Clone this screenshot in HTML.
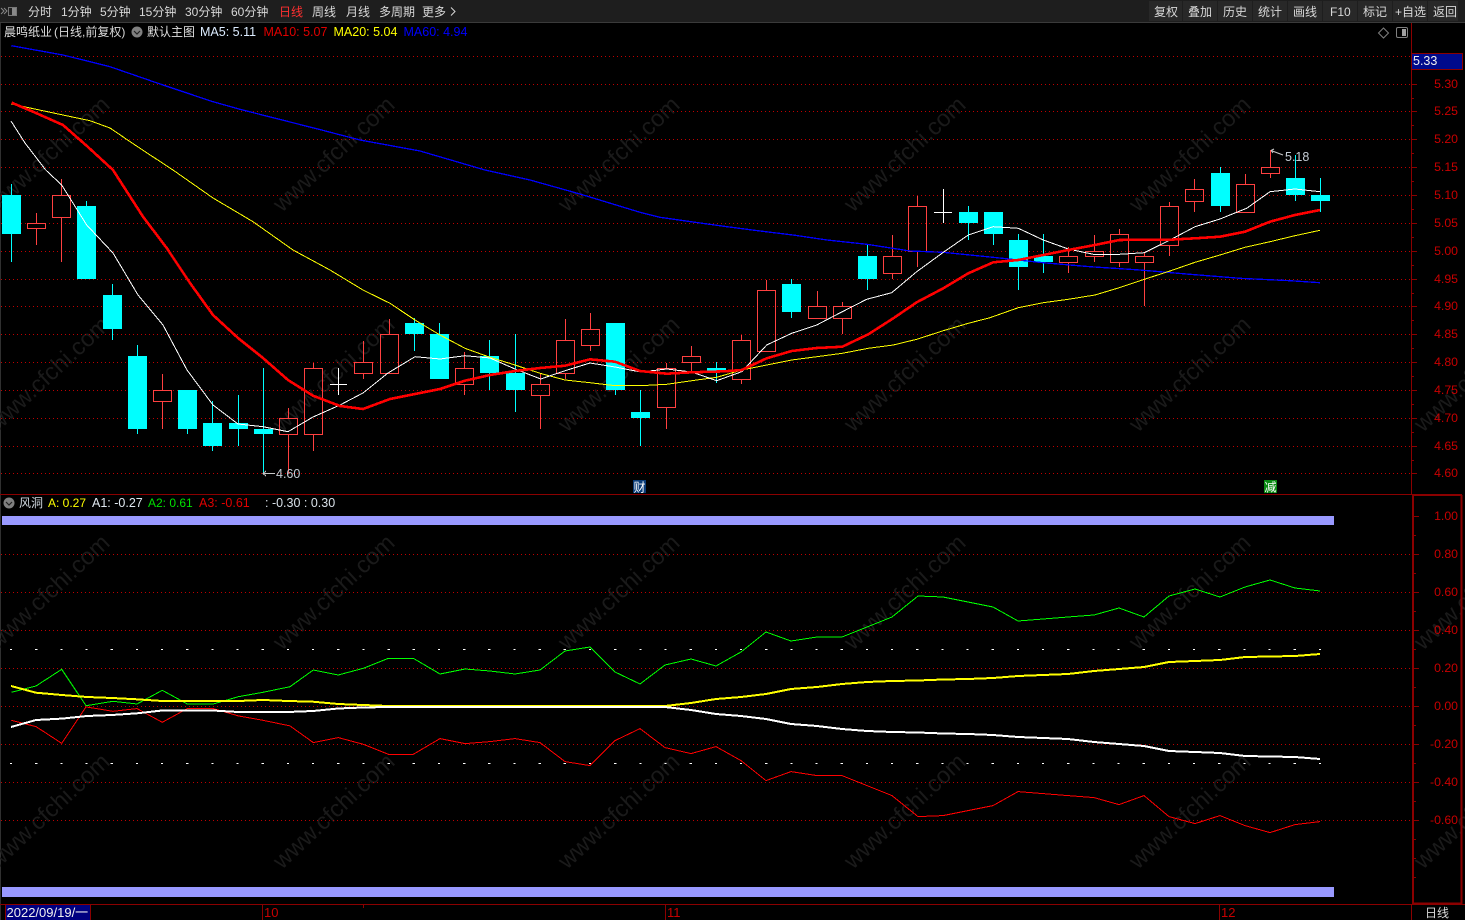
<!DOCTYPE html>
<html>
<head>
<meta charset="utf-8">
<style>
html,body{margin:0;padding:0;background:#000;width:1465px;height:920px;overflow:hidden}
svg{display:block;position:absolute;left:0;top:0}
text{font-family:"Liberation Sans","Noto Sans CJK SC",sans-serif;white-space:pre}
.tb{font-size:12px;fill:#d8d8d8}
.ax{font-size:12.3px;fill:#c80000;text-anchor:end}
.wm{font-size:23.6px;fill:#1a1a1a}
.lg{font-size:12.5px}
</style>
</head>
<body>
<svg width="1465" height="920" viewBox="0 0 1465 920" xmlns="http://www.w3.org/2000/svg">
<defs>
<pattern id="dots" patternUnits="userSpaceOnUse" width="4" height="1"><rect x="1" y="0" width="1" height="1" fill="#c00000"/></pattern>
</defs>
<rect width="1465" height="920" fill="#000"/>
<rect x="0" y="0" width="1" height="920" fill="#303030"/>

<!-- watermarks -->
<g class="wm">
<text transform="translate(-3,213) rotate(-43)">www.cfchi.com</text>
<text transform="translate(282,213) rotate(-43)">www.cfchi.com</text>
<text transform="translate(567,213) rotate(-43)">www.cfchi.com</text>
<text transform="translate(853,213) rotate(-43)">www.cfchi.com</text>
<text transform="translate(1138,213) rotate(-43)">www.cfchi.com</text>
<text transform="translate(-3,433) rotate(-43)">www.cfchi.com</text>
<text transform="translate(282,433) rotate(-43)">www.cfchi.com</text>
<text transform="translate(567,433) rotate(-43)">www.cfchi.com</text>
<text transform="translate(853,433) rotate(-43)">www.cfchi.com</text>
<text transform="translate(1138,433) rotate(-43)">www.cfchi.com</text>
<text transform="translate(1423,433) rotate(-43)">www.cfchi.com</text>
<text transform="translate(-3,651) rotate(-43)">www.cfchi.com</text>
<text transform="translate(282,651) rotate(-43)">www.cfchi.com</text>
<text transform="translate(567,651) rotate(-43)">www.cfchi.com</text>
<text transform="translate(853,651) rotate(-43)">www.cfchi.com</text>
<text transform="translate(1138,651) rotate(-43)">www.cfchi.com</text>
<text transform="translate(1423,651) rotate(-43)">www.cfchi.com</text>
<text transform="translate(-3,870) rotate(-43)">www.cfchi.com</text>
<text transform="translate(282,870) rotate(-43)">www.cfchi.com</text>
<text transform="translate(567,870) rotate(-43)">www.cfchi.com</text>
<text transform="translate(853,870) rotate(-43)">www.cfchi.com</text>
<text transform="translate(1138,870) rotate(-43)">www.cfchi.com</text>
<text transform="translate(1423,870) rotate(-43)">www.cfchi.com</text>
</g>

<!-- grids -->
<path fill="url(#dots)" shape-rendering="crispEdges" d="M1 56H1411V57H1ZM1 84H1411V85H1ZM1 111H1411V112H1ZM1 139H1411V140H1ZM1 167H1411V168H1ZM1 195H1411V196H1ZM1 223H1411V224H1ZM1 251H1411V252H1ZM1 279H1411V280H1ZM1 306H1411V307H1ZM1 334H1411V335H1ZM1 362H1411V363H1ZM1 390H1411V391H1ZM1 418H1411V419H1ZM1 446H1411V447H1ZM1 473H1411V474H1ZM1 554H1411V555H1ZM1 592H1411V593H1ZM1 630H1411V631H1ZM1 668H1411V669H1ZM1 706H1411V707H1ZM1 744H1411V745H1ZM1 782H1411V783H1ZM1 820H1411V821H1Z"/>
<path d="M10 649.5H1322M10 763.5H1322" stroke="#ffffff" stroke-width="1" stroke-dasharray="2.2 22.97" fill="none" shape-rendering="crispEdges"/>

<!-- candles: cyan wicks -->
<path shape-rendering="crispEdges" fill="none" stroke="#00ffff" stroke-width="1" d="M11.5 184V262M86.5 201V207M112.5 284V340M137.5 345V434M187.5 428V434M212.5 401V451M238.5 395V446M263.5 368V473M414.5 318V351M439.5 323V335M489.5 340V390M515.5 334V412M615.5 385V395M640.5 390V446M716.5 362V383M791.5 279V318M867.5 245V290M968.5 206V240M993.5 232V245M1018.5 234V290M1043.5 234V273M1220.5 167V212M1295.5 155V201M1320.5 178V212"/>
<!-- cyan bodies -->
<g fill="#00ffff" shape-rendering="crispEdges">
<rect x="2" y="195" width="19" height="39"/>
<rect x="77" y="206" width="19" height="73"/>
<rect x="103" y="295" width="19" height="34"/>
<rect x="128" y="356" width="19" height="73"/>
<rect x="178" y="390" width="19" height="39"/>
<rect x="203" y="423" width="19" height="23"/>
<rect x="229" y="423" width="19" height="6"/>
<rect x="254" y="429" width="19" height="5"/>
<rect x="405" y="323" width="19" height="11"/>
<rect x="430" y="334" width="19" height="45"/>
<rect x="480" y="356" width="19" height="17"/>
<rect x="506" y="373" width="19" height="17"/>
<rect x="606" y="323" width="19" height="67"/>
<rect x="631" y="412" width="19" height="6"/>
<rect x="707" y="368" width="19" height="4"/>
<rect x="782" y="284" width="19" height="28"/>
<rect x="858" y="256" width="19" height="23"/>
<rect x="959" y="212" width="19" height="11"/>
<rect x="984" y="212" width="19" height="22"/>
<rect x="1009" y="240" width="19" height="27"/>
<rect x="1034" y="256" width="19" height="6"/>
<rect x="1211" y="173" width="19" height="33"/>
<rect x="1286" y="178" width="19" height="17"/>
<rect x="1311" y="195" width="19" height="6"/>
</g>
<!-- red wicks -->
<path shape-rendering="crispEdges" fill="none" stroke="#ff4040" stroke-width="1" d="M36.5 213V223M36.5 229V245M61.5 179V195M61.5 218V262M162.5 374V390M162.5 402V429M288.5 408V418M288.5 435V473M313.5 363V368M313.5 435V451M363.5 341V362M363.5 373V379M389.5 319V334M464.5 352V368M464.5 384V395M540.5 373V384M540.5 396V429M565.5 319V340M565.5 373V379M590.5 313V329M590.5 346V351M666.5 363V368M666.5 408V429M691.5 346V356M691.5 363V372M741.5 335V340M741.5 379V384M766.5 280V290M817.5 291V306M842.5 302V306M842.5 319V334M892.5 235V256M892.5 274V279M917.5 196V206M917.5 252V267M1068.5 247V256M1068.5 263V273M1094.5 235V251M1094.5 257V262M1119.5 229V234M1119.5 263V267M1144.5 252V256M1144.5 263V306M1169.5 202V206M1169.5 245V256M1194.5 179V189M1194.5 202V212M1245.5 174V184M1270.5 150V167M1270.5 174V178"/>
<!-- red bodies -->
<g fill="none" stroke="#ff4040" stroke-width="1" shape-rendering="crispEdges">
<rect x="27.5" y="223.5" width="18" height="5"/>
<rect x="52.5" y="195.5" width="18" height="22"/>
<rect x="153.5" y="390.5" width="18" height="11"/>
<rect x="279.5" y="418.5" width="18" height="16"/>
<rect x="304.5" y="368.5" width="18" height="66"/>
<rect x="354.5" y="362.5" width="18" height="11"/>
<rect x="380.5" y="334.5" width="18" height="39"/>
<rect x="455.5" y="368.5" width="18" height="16"/>
<rect x="531.5" y="384.5" width="18" height="11"/>
<rect x="556.5" y="340.5" width="18" height="33"/>
<rect x="581.5" y="329.5" width="18" height="16"/>
<rect x="657.5" y="368.5" width="18" height="39"/>
<rect x="682.5" y="356.5" width="18" height="6"/>
<rect x="732.5" y="340.5" width="18" height="39"/>
<rect x="757.5" y="290.5" width="18" height="61"/>
<rect x="808.5" y="306.5" width="18" height="12"/>
<rect x="833.5" y="306.5" width="18" height="12"/>
<rect x="883.5" y="256.5" width="18" height="17"/>
<rect x="908.5" y="206.5" width="18" height="45"/>
<rect x="1059.5" y="256.5" width="18" height="6"/>
<rect x="1085.5" y="251.5" width="18" height="5"/>
<rect x="1110.5" y="234.5" width="18" height="28"/>
<rect x="1135.5" y="256.5" width="18" height="6"/>
<rect x="1160.5" y="206.5" width="18" height="39"/>
<rect x="1185.5" y="189.5" width="18" height="12"/>
<rect x="1236.5" y="184.5" width="18" height="28"/>
<rect x="1261.5" y="167.5" width="18" height="6"/>
</g>
<!-- doji crosses -->
<path shape-rendering="crispEdges" fill="none" stroke="#fff" stroke-width="1" d="M338.5 368V395M330 384.5H347M943.5 189V223M934 212.5H952"/>

<!-- MA60 -->
<polyline shape-rendering="crispEdges" fill="none" stroke="#0000ff" stroke-width="1.3" points="11.3,45.7 63,55 110,66.7 163,85 213,101.7 240,109.3 273,117.7 315,128.3 360,140 420,151 485,170 530,180 580,194 640,212.3 660,217.3 693,222 727,226.7 760,231 793,235 827,240 867,244.3 910,251 943,252.3 993,257.3 1043,262.7 1090,266.7 1140,270 1190,274.3 1240,278.3 1290,280.7 1320,282.7"/>
<!-- MA20 -->
<polyline shape-rendering="crispEdges" fill="none" stroke="#ffff00" stroke-width="1" points="11.3,104 63,115 90,120.7 110,128 135,145 173,170 213,198 253,221.7 293,250 330,270 363,290 390,303.3 415,320 440,335 465,348.3 490,357.3 515,365 540,373.3 565,380 590,382.7 615,385.7 640,385.7 666.7,384.3 691.7,380.7 716.7,377.3 741.7,370 766.7,365 791.7,360 816.7,356.7 842.3,353.3 868.3,348.3 893.3,345 916.7,339.3 943.3,330.7 968.3,323.3 990,317.7 1018.3,307.7 1043.3,302.7 1068.3,299.3 1095,295 1119.3,287.7 1144.3,279.3 1170,271 1195,262.3 1220,255 1245,247.3 1270,241.7 1295,235.7 1320,230.3"/>
<!-- MA5 -->
<polyline shape-rendering="crispEdges" fill="none" stroke="#ffffff" stroke-width="1" points="11,121 25,143 45.7,170 61.7,185 86.7,225 113,253 138,295 163,325 187,370 213,405 238,424 263,426.7 288,431.7 313,417 340,405 363,393 388,373 415,356.7 440,359 465,355.7 490,358 515,369 540.7,379 565,370.7 590,363 615,367 640.7,372 666.7,369 691.7,372 716.7,380.7 741.7,371.7 766.7,345 791.7,333.3 816.7,325 842.3,311.7 866.7,299.3 891.7,292.7 916.7,271.7 943.3,252.3 968.3,235 993.3,226.7 1018.3,228.3 1043.3,240 1068.3,249 1093.3,254.3 1119.3,254.3 1144.3,252.7 1170,240 1195,226.7 1220,219 1246.7,208.3 1270,191.7 1295,189 1320,191.7"/>
<!-- MA10 -->
<polyline shape-rendering="crispEdges" fill="none" stroke="#ff0000" stroke-width="2.6" points="11.7,102.7 33,111.7 63,125 88,147 113,170 143,216.7 166.7,248 190,283 213,315 238,338 263,358 288,380 313,395.7 340,406 363,409 390,399 415,394 440,389 465,380.7 490,375 515,371 540,368 565,365.7 590,359.3 615,361.7 640,371 666.7,373.7 691.7,372.3 725,371.3 741.7,370 766.7,358.3 791.7,351 816.7,348 842.3,346.7 868.3,334.3 893.3,318.3 916.7,302.3 943.3,288.3 968.3,273.3 993.3,262.3 1018.3,260 1043.3,255 1068.3,250 1093.3,245.3 1119.3,240 1144.3,239.7 1170,239.7 1195,238.3 1220,236.7 1245,231.7 1270,221.7 1295,215 1320,210"/>

<!-- annotations -->
<path d="M263 473.5H275M266 471L263 473.5L266 476" stroke="#c8c8c8" stroke-width="1" fill="none" shape-rendering="crispEdges"/>
<text x="276" y="478" font-size="12.5" fill="#c4ccd4">4.60</text>
<path d="M1271 150.5L1283 155M1271 150.5L1274 149M1271 150.5L1273 153" stroke="#c8c8c8" stroke-width="1" fill="none"/>
<text x="1285" y="161" font-size="12.5" fill="#c4ccd4">5.18</text>

<!-- event tags -->
<rect x="633" y="480" width="13" height="13" fill="#0a3c78"/>
<text x="633.5" y="491.5" font-size="12" fill="#fff">财</text>
<rect x="1264" y="480" width="13" height="13" fill="#0a8a12"/>
<text x="1264.5" y="491.5" font-size="12" fill="#fff">减</text>

<!-- lower bars -->
<rect x="2" y="516" width="1332" height="9" fill="#9999ff"/>
<rect x="2" y="887" width="1332" height="10" fill="#9999ff"/>

<!-- A2 green -->
<polyline shape-rendering="crispEdges" fill="none" stroke="#00ff00" stroke-width="1" points="11.3,692.3 36,686 61.7,669.3 86,705.7 113,701.3 137,704 162.3,690.3 187.3,704 213.3,704 238.3,696.7 263,692.3 290,686.7 313.3,670 338.3,675 363.3,668.3 388.3,658.3 413.3,658.3 440,674 465,669 490,671 515,674 540,670 565,651 590,647 615,672 640,684 665,665 691,659 716,666 741,652 766,632 791,641 817,637 842,637 867,627 892,617 918,596 943,597 968,602 993,607 1018,621 1043,619 1068,617 1094,615 1119,608 1144,617 1169,596 1195,589 1220,597 1245,587 1270,580 1295,588 1320,591"/>
<!-- A3 red -->
<polyline shape-rendering="crispEdges" fill="none" stroke="#ff0000" stroke-width="1" points="11.3,720.3 36,726.6 61.7,743.3 86,706.9 113,711.3 137,708.6 162.3,722.3 187.3,708.6 213.3,708.6 238.3,715.9 263,720.3 290,725.9 313.3,742.6 338.3,737.6 363.3,744.3 388.3,754.3 413.3,754.3 440,738.6 465,743.6 490,741.6 515,738.6 540,742.6 565,761.6 590,765.6 615,740.6 640,728.6 665,747.6 691,753.6 716,746.6 741,760.6 766,780.6 791,771.6 817,775.6 842,775.6 867,785.6 892,795.6 918,816.6 943,815.6 968,810.6 993,805.6 1018,791.6 1043,793.6 1068,795.6 1094,797.6 1119,804.6 1144,795.6 1169,816.6 1195,823.6 1220,815.6 1245,825.6 1270,832.6 1295,824.6 1320,821.6"/>
<!-- A yellow -->
<polyline shape-rendering="crispEdges" fill="none" stroke="#ffff00" stroke-width="2" points="11,686 36,692.7 62,695 87,697 112,698 137,699.3 162,701 187,701 213,701 238,701 263,700 288,701 313,701.7 338,704 363,705 388,706 665,706 691,703 716,699 741,697 766,694 791,689 817,687 842,684 867,682 892,681 918,680.5 943,679.5 968,679 993,678 1018,676 1043,675 1068,674 1094,671 1119,669 1144,667 1169,662 1195,661 1220,660 1245,657 1270,656.5 1295,656 1320,654"/>
<!-- A1 white -->
<polyline shape-rendering="crispEdges" fill="none" stroke="#ffffff" stroke-width="2" points="11,727 36,720 62,718.6 87,716 112,715 137,713.3 162,710.5 187,710.5 213,710.5 238,712 263,712 288,712 313,711 338,708.5 363,707.5 388,707 665,707 691,710 716,714 741,716 766,719 791,724 817,726 842,729 867,731 892,732 918,732.5 943,733.5 968,734 993,735 1018,737 1043,738 1068,739 1094,742 1119,744 1144,746 1169,751 1195,752 1220,753 1245,756 1270,756.5 1295,757 1320,759"/>

<!-- separators & axes -->
<g shape-rendering="crispEdges" fill="none" stroke="#8b0000">
<path d="M0 494.5H1412" stroke-width="1"/>
<path d="M1411.5 22V494" stroke-width="1"/>
<path d="M1412 495H1462M1413 495V904M1461.5 495V904M1412 903.5H1462" stroke-width="2"/>
<path d="M0 904.5H1465" stroke-width="1.4"/>
<path d="M1411.5 904V920M262.5 904V920M665.5 904V920M1219.5 904V920M5.5 904V920M90.5 904V920M363.5 904V908" stroke-width="1"/>
<path stroke-width="1" d="M1412 84.5H1417M1412 111.5H1417M1412 139.5H1417M1412 167.5H1417M1412 195.5H1417M1412 223.5H1417M1412 251.5H1417M1412 279.5H1417M1412 306.5H1417M1412 334.5H1417M1412 362.5H1417M1412 390.5H1417M1412 418.5H1417M1412 446.5H1417M1412 473.5H1417M1412 98.5H1414M1412 125.5H1414M1412 153.5H1414M1412 181.5H1414M1412 209.5H1414M1412 237.5H1414M1412 265.5H1414M1412 293.5H1414M1412 320.5H1414M1412 348.5H1414M1412 376.5H1414M1412 404.5H1414M1412 432.5H1414M1412 460.5H1414"/>
<path stroke-width="1" d="M1414 516.5H1419M1414 554.5H1419M1414 592.5H1419M1414 630.5H1419M1414 668.5H1419M1414 706.5H1419M1414 744.5H1419M1414 782.5H1419M1414 820.5H1419M1414 535.5H1416M1414 573.5H1416M1414 611.5H1416M1414 649.5H1416M1414 687.5H1416M1414 725.5H1416M1414 763.5H1416M1414 801.5H1416M1414 839.5H1416M1414 858.5H1416M1414 877.5H1416"/>
</g>

<!-- axis labels -->
<g class="ax">
<text x="1458" y="88">5.30</text>
<text x="1458" y="115">5.25</text>
<text x="1458" y="143">5.20</text>
<text x="1458" y="171">5.15</text>
<text x="1458" y="199">5.10</text>
<text x="1458" y="227">5.05</text>
<text x="1458" y="255">5.00</text>
<text x="1458" y="283">4.95</text>
<text x="1458" y="310">4.90</text>
<text x="1458" y="338">4.85</text>
<text x="1458" y="366">4.80</text>
<text x="1458" y="394">4.75</text>
<text x="1458" y="422">4.70</text>
<text x="1458" y="450">4.65</text>
<text x="1458" y="477">4.60</text>
<text x="1458" y="520">1.00</text>
<text x="1458" y="558">0.80</text>
<text x="1458" y="596">0.60</text>
<text x="1458" y="634">0.40</text>
<text x="1458" y="672">0.20</text>
<text x="1458" y="710">0.00</text>
<text x="1458" y="748">-0.20</text>
<text x="1458" y="786">-0.40</text>
<text x="1458" y="824">-0.60</text>
</g>
<!-- price box -->
<rect x="1411.5" y="53.5" width="51" height="16" fill="#000a8c" stroke="#8b0000" stroke-width="1" shape-rendering="crispEdges"/>
<text x="1413" y="65" font-size="12.5" fill="#f0f0f0">5.33</text>

<!-- toolbar -->
<rect x="0" y="0" width="1465" height="22" fill="#1e1e1e"/>
<rect x="0" y="22" width="1465" height="1" fill="#3a3a3a"/>
<path d="M1 8L4 11L1 14M4 8L7 11L4 14" stroke="#888" stroke-width="1" fill="none"/>
<rect x="8.5" y="7.5" width="8" height="8" fill="#222" stroke="#777"/>
<rect x="12" y="8" width="4" height="7" fill="#888"/>
<g class="tb">
<text x="28" y="16">分时</text>
<text x="61" y="16">1分钟</text>
<text x="100" y="16">5分钟</text>
<text x="139" y="16">15分钟</text>
<text x="185" y="16">30分钟</text>
<text x="231" y="16">60分钟</text>
<text x="279" y="16" style="fill:#ff3030">日线</text>
<text x="312" y="16">周线</text>
<text x="346" y="16">月线</text>
<text x="379" y="16">多周期</text>
<text x="422" y="16">更多</text>
</g>
<path d="M451 7.5L455 11.5L451 15.5" stroke="#d8d8d8" stroke-width="1" fill="none"/>
<!-- right buttons -->
<g fill="#282828">
<rect x="1149" y="1" width="33" height="20"/>
<rect x="1183" y="1" width="34" height="20"/>
<rect x="1218" y="1" width="34" height="20"/>
<rect x="1253" y="1" width="34" height="20"/>
<rect x="1288" y="1" width="34" height="20"/>
<rect x="1323" y="1" width="34" height="20"/>
<rect x="1358" y="1" width="34" height="20"/>
<rect x="1393" y="1" width="34" height="20"/>
<rect x="1428" y="1" width="30" height="20"/>
</g>
<g class="tb">
<text x="1154" y="16">复权</text>
<text x="1188" y="16">叠加</text>
<text x="1223" y="16">历史</text>
<text x="1258" y="16">统计</text>
<text x="1293" y="16">画线</text>
<text x="1330" y="16">F10</text>
<text x="1363" y="16">标记</text>
<text x="1395" y="16">+自选</text>
<text x="1433" y="16">返回</text>
</g>

<!-- legend main -->
<text x="4" y="36" font-size="12" fill="#e0e0e0">晨鸣纸业</text>
<text x="54" y="36" font-size="12" fill="#d8d8d8">(日线,前复权)</text>
<circle cx="137" cy="32" r="5.5" fill="#808080"/>
<path d="M134 31L137 34L140 31" stroke="#222" stroke-width="1.2" fill="none"/>
<text x="147" y="36" font-size="12" fill="#e0e0e0">默认主图</text>
<text x="200" y="36" class="lg" fill="#dcecff">MA5: 5.11</text>
<text x="263.5" y="36" class="lg" fill="#e00000">MA10: 5.07</text>
<text x="333.5" y="36" class="lg" fill="#ffff00">MA20: 5.04</text>
<text x="403.5" y="36" class="lg" fill="#0000ff">MA60: 4.94</text>
<path d="M1383.5 28L1388.5 33L1383.5 38L1378.5 33Z" stroke="#808080" fill="none"/>
<rect x="1396.5" y="27.5" width="11" height="10" rx="1.5" fill="none" stroke="#808080"/>
<rect x="1402" y="29" width="4" height="7" fill="#a0a0a0"/>

<!-- legend lower -->
<circle cx="9" cy="503" r="5.5" fill="#808080"/>
<path d="M6 502L9 505L12 502" stroke="#222" stroke-width="1.2" fill="none"/>
<text x="19" y="507" font-size="12" fill="#d0d8e0">风洞</text>
<text x="48" y="507" class="lg" style="font-size:12px" fill="#ffff00">A: 0.27</text>
<text x="92" y="507" class="lg" fill="#e0e8f0">A1: -0.27</text>
<text x="148" y="507" class="lg" style="font-size:12px" fill="#00e000">A2: 0.61</text>
<text x="199" y="507" class="lg" fill="#e00000">A3: -0.61</text>
<text x="265" y="507" class="lg" fill="#d8e0e8">: -0.30 : 0.30</text>

<!-- bottom bar -->
<rect x="6" y="905" width="84" height="15" fill="#000080"/>
<text x="6.5" y="917" font-size="13" fill="#f0f0f0">2022/09/19/一</text>
<text x="264" y="917" font-size="13" fill="#c80000">10</text>
<text x="667" y="917" font-size="13" fill="#c80000">11</text>
<text x="1221" y="917" font-size="13" fill="#c80000">12</text>
<text x="1425" y="917" font-size="12" fill="#d8d8d8">日线</text>
</svg>
</body>
</html>
